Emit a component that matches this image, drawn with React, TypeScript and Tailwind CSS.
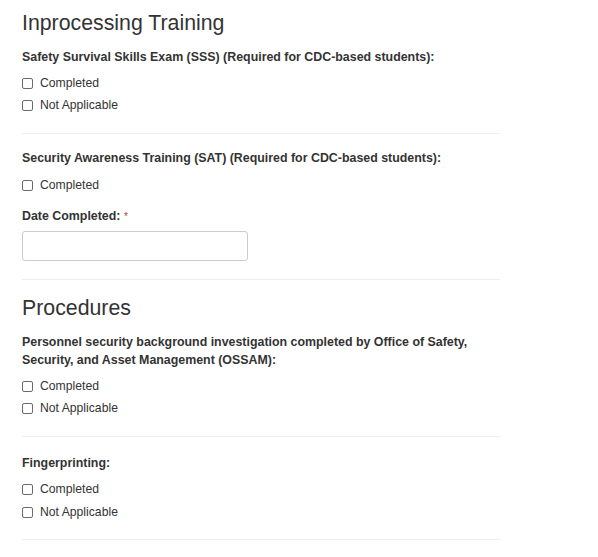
const font = { fontFamily: '"Liberation Sans", Arial, sans-serif' };

function Check({ label, className = '' }: { label: string; className?: string }) {
  return (
    <label className={`flex items-center h-[17px] text-[12.2px] leading-[17px] text-[#333] ${className}`}>
      <input
        type="checkbox"
        className="appearance-none w-[11px] h-[11px] border border-[#6b6b6b] rounded-[2px] bg-white mr-[7px] shrink-0"
      />
      {label}
    </label>
  );
}

function Rule({ className = '' }: { className?: string }) {
  return <div className={`h-px bg-[#eeeeee] w-[478px] ${className}`} />;
}

export default function App() {
  return (
    <div style={font} className="bg-white min-h-[557px] px-[22px] pt-[12px] text-[#333]">
      <h3 className="text-[21.3px] leading-[23px] font-normal">Inprocessing Training</h3>

      <p className="mt-[14px] text-[12.4px] leading-[17px] font-bold">
        Safety Survival Skills Exam (SSS) (Required for CDC-based students):
      </p>
      <Check label="Completed" className="mt-[9px]" />
      <Check label="Not Applicable" className="mt-[5px]" />

      <Rule className="mt-[19px]" />

      <p className="mt-[16px] text-[12.4px] leading-[17px] font-bold">
        Security Awareness Training (SAT) (Required for CDC-based students):
      </p>
      <Check label="Completed" className="mt-[10px]" />

      <p className="mt-[14px] text-[12.4px] leading-[17px] font-bold">
        Date Completed: <span className="text-[#a94442] font-normal text-[10px] align-top">*</span>
      </p>
      <input
        type="text"
        className="mt-[6px] block w-[226px] h-[30px] border border-[#cccccc] rounded-[3px] bg-white"
      />

      <Rule className="mt-[18px]" />

      <h3 className="mt-[17px] text-[21.3px] leading-[23px] font-normal">Procedures</h3>

      <p className="mt-[13px] text-[12.4px] leading-[18px] font-bold w-[478px]">
        Personnel security background investigation completed by Office of Safety, Security, and Asset Management (OSSAM):
      </p>
      <Check label="Completed" className="mt-[9px]" />
      <Check label="Not Applicable" className="mt-[5px]" />

      <Rule className="mt-[19px]" />

      <p className="mt-[18px] text-[12.4px] leading-[17px] font-bold">Fingerprinting:</p>
      <Check label="Completed" className="mt-[9px]" />
      <Check label="Not Applicable" className="mt-[6px]" />

      <Rule className="mt-[18px]" />
    </div>
  );
}
